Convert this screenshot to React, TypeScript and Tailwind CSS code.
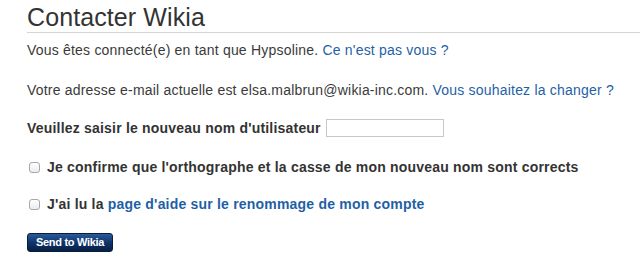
import React from "react";

export default function App() {
  return (
    <div className="w-[640px] h-[260px] bg-white overflow-hidden pl-[27px] text-[#3a3a3a]" style={{ fontFamily: '"Liberation Sans", Arial, sans-serif' }}>
      <h1 className="text-[25px] leading-[29px] pt-[3px] border-b border-[#d5d5d5] text-[#333] tracking-[0.1px]">Contacter Wikia</h1>
      <p className="text-[14px] leading-[18px] mt-[8px] tracking-[0.2px]">
        Vous êtes connecté(e) en tant que Hypsoline. <a className="text-[#1f5fa6]">Ce n'est pas vous ?</a>
      </p>
      <p className="text-[14px] leading-[18px] mt-[22px] tracking-[0.2px]">
        Votre adresse e-mail actuelle est elsa.malbrun@wikia-inc.com. <a className="text-[#1f5fa6]">Vous souhaitez la changer ?</a>
      </p>
      <div className="flex items-center mt-[20px] h-[18px]">
        <span className="text-[14px] leading-[18px] font-bold tracking-[0.2px] text-[#333]">Veuillez saisir le nouveau nom d'utilisateur</span>
        <input className="ml-[5px] w-[118px] h-[18px] border border-[#c8c8c8] bg-white" />
      </div>
      <div className="flex items-center mt-[21px] h-[18px]">
        <span className="w-[11px] h-[11px] ml-[2px] mr-[7px] rounded-[3px] border border-[#a8a8a8] bg-gradient-to-b from-white to-[#ececec]" />
        <span className="text-[14px] leading-[18px] font-bold tracking-[0.2px] text-[#333]">Je confirme que l'orthographe et la casse de mon nouveau nom sont corrects</span>
      </div>
      <div className="flex items-center mt-[19px] h-[18px]">
        <span className="w-[11px] h-[11px] ml-[2px] mr-[7px] rounded-[3px] border border-[#a8a8a8] bg-gradient-to-b from-white to-[#ececec]" />
        <span className="text-[14px] leading-[18px] font-bold tracking-[0.2px] text-[#333]">J'ai lu la <a className="text-[#1f5fa6]">page d'aide sur le renommage de mon compte</a></span>
      </div>
      <button className="block mt-[20px] h-[19px] px-[8px] rounded-[3px] border border-[#0a1e3c] bg-gradient-to-b from-[#2a5a9a] via-[#0f356c] to-[#071e44] text-white text-[11px] font-bold leading-[17px] tracking-[-0.3px]">
        Send to Wikia
      </button>
    </div>
  );
}
